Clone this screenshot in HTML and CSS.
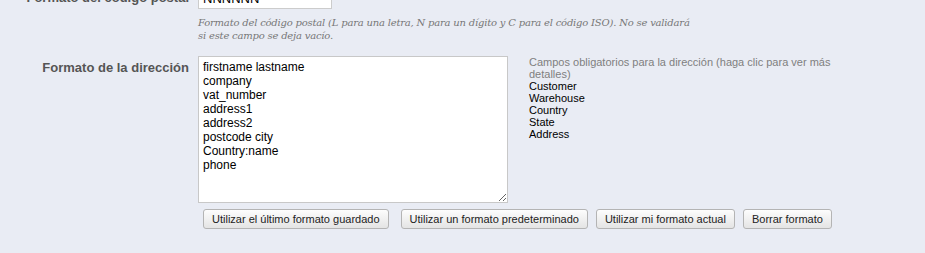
FILE: index.html
```html
<!DOCTYPE html>
<html lang="es">
<head>
<meta charset="utf-8">
<title>Formato de la dirección</title>
<link rel="stylesheet" href="styles.css">
</head>
<body>
<div id="wrap">
    <div class="row row-zip">
        <label class="lbl">Formato del código postal</label>
        <div class="field">
            <input class="zip" type="text" value="NNNNNN">
            <p class="hint">Formato del código postal (L para una letra, N para un dígito y C para el código ISO). No se validará<br>si este campo se deja vacío.</p>
        </div>
    </div>

    <div class="row row-addr">
        <label class="lbl">Formato de la dirección</label>
        <div class="field">
            <div class="addr">
                <textarea class="layout">firstname lastname
company
vat_number
address1
address2
postcode city
Country:name
phone</textarea>
                <div class="fields">
                    <p class="help">Campos obligatorios para la dirección (haga clic para ver más detalles)</p>
                    <ul>
                        <li>Customer</li>
                        <li>Warehouse</li>
                        <li>Country</li>
                        <li>State</li>
                        <li>Address</li>
                    </ul>
                </div>
            </div>
            <div class="btns">
                <button class="first">Utilizar el último formato guardado</button>
                <button>Utilizar un formato predeterminado</button>
                <button>Utilizar mi formato actual</button>
                <button>Borrar formato</button>
            </div>
        </div>
    </div>
</div>
</body>
</html>
```

FILE: styles.css
```css
body,p,ul{margin: 0;padding: 0;}
li{list-style: none;}
body{background: #E9ECF4;font-family: "Liberation Sans", Arial, sans-serif;font-size: 12px;color: #000;}
#wrap{margin-top: -13px;}
.row{display: flex;}
.lbl{width: 189px;flex: none;padding-right: 9px;text-align: right;font-weight: bold;font-size: 13px;color: #555;box-sizing: content-box;}
.field{flex: 1;}
.row-zip .lbl{line-height: 22px;}
.zip{display: block;width: 134px;height: 22px;box-sizing: border-box;border: 1px solid #CCC;background: #FFF;font: 13px "Liberation Sans", Arial, sans-serif;padding: 0 4px;color: #000;}
.hint{margin-top: 7px;font: italic 10px/13px "DejaVu Serif", Georgia, serif;color: #777;letter-spacing: -0.2px;}
.row-addr{margin-top: 14px;}
.row-addr .lbl{padding-top: 4px;}
.addr{display: flex;}
.layout{width: 310px;height: 147px;box-sizing: border-box;border: 1px solid #C8C8C8;background: #FFF;padding: 3px 4px;margin: 0;font: 12px/14px "Liberation Sans", Arial, sans-serif;color: #000;resize: both;}
.fields{width: 340px;margin-left: 21px;font-size: 11px;line-height: 12px;}
.help{color: #7F7F7F;}
.btns{display: flex;gap: 8px;margin: 6px 0 0 5px;}
.btns .first{margin-right: 4px;}
button{height: 20px;padding: 0 8px;border: 1px solid #B4B4B4;border-radius: 3px;background: linear-gradient(#FDFDFD, #E4E4E4);font: 11px "Liberation Sans", Arial, sans-serif;color: #222;}
```
